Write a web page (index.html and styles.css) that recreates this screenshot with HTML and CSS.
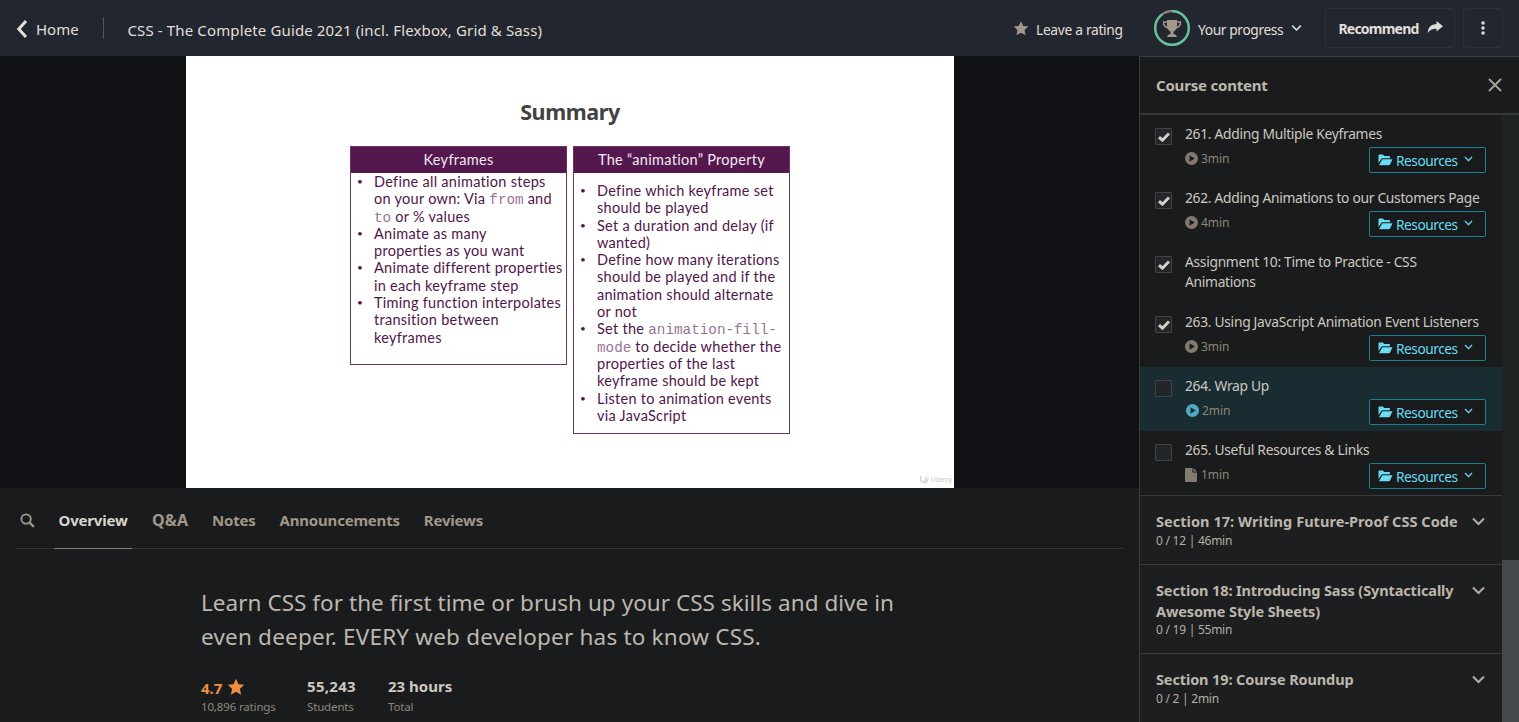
FILE: index.html
```html
<!DOCTYPE html>
<html lang="en">
<head>
<meta charset="utf-8">
<title>CSS - The Complete Guide 2021</title>
<link rel="stylesheet" href="styles.css">
</head>
<body>
<svg class="defs" aria-hidden="true">
  <symbol id="star" viewBox="0 0 24 24"><path d="M12 1l3.3 7.2 7.7.9-5.7 5.3 1.5 7.8L12 18.400l-6.800 3.800 1.500-7.800L1 9.100l7.700-.9z"/></symbol>
  <symbol id="chevron" viewBox="0 0 14 9"><path d="M1.500 1.500L7 7l5.500-5.500" fill="none" stroke="currentColor" stroke-width="2"/></symbol>
  <symbol id="check" viewBox="0 0 12 10"><path d="M1 5.200l3.400 3L11 1.500" fill="none" stroke="currentColor" stroke-width="3"/></symbol>
  <symbol id="play" viewBox="0 0 13 13"><path fill-rule="evenodd" d="M6.500 0a6.500 6.500 0 1 0 0 13 6.500 6.500 0 0 0 0-13zM4.500 3.200l5.300 3.300-5.300 3.300z"/></symbol>
  <symbol id="file" viewBox="0 0 12 14"><path d="M1 0h6.500v4.500H12V13q0 1-1 1H1q-1 0-1-1V1q0-1 1-1zM8.500 0L12 3.500H8.500z"/></symbol>
  <symbol id="folder" viewBox="0 0 15 12"><path d="M.5 9V1.500Q.5.500 1.500.500h3.300L6.300 2H11q1 0 1 1v1.300H4.500Q3.500 4.300 3 5.200zM4.300 5.300h10.200L12 10.500q-.4.800-1.300.8H1z"/></symbol>
</svg>

<header class="topbar">
  <a class="home"><svg class="back" viewBox="0 0 12 20"><path d="M10 2L2.800 10l7.200 8" fill="none" stroke="currentColor" stroke-width="3"/></svg><span>Home</span></a>
  <div class="course-title">CSS - The Complete Guide 2021 (incl. Flexbox, Grid &amp; Sass)</div>
  <a class="rate"><svg class="rate-star"><use href="#star"/></svg><span>Leave a rating</span></a>
  <a class="progress">
    <svg class="ring" viewBox="0 0 36 36">
      <circle cx="18" cy="18" r="16.800" fill="none" stroke="#8b8378" stroke-width="2.200"/>
      <circle class="ring-done" cx="18" cy="18" r="16.800" pathLength="100" stroke-dasharray="90 10" transform="rotate(-90 18 18)"/>
      <g fill="#a39788"><path d="M13 10h10v5q0 5-3.500 6.500v2.500q2.500.3 3.500 2.500v.5H13v-.5q1-2.200 3.500-2.500v-2.500Q13 20 13 15z"/><path d="M13.500 12H9.500q0 5 5 6M22.500 12h4q0 5-5 6" fill="none" stroke="#a39788" stroke-width="1.500"/></g>
    </svg>
    <span>Your progress</span><svg class="chev-sm"><use href="#chevron"/></svg>
  </a>
  <button class="recommend"><span>Recommend</span><svg class="share" viewBox="0 0 16 12"><path d="M9.500 0L16 5.300l-6.500 5.200V7.700Q3.500 7.500.5 12 1 3.500 9.500 3z"/></svg></button>
  <button class="more"><svg viewBox="0 0 4 14"><circle cx="2" cy="2" r="1.700"/><circle cx="2" cy="7" r="1.700"/><circle cx="2" cy="12" r="1.700"/></svg></button>
</header>

<div class="layout">
  <main>
    <section class="player">
      <div class="slide">
        <h1>Summary</h1>
        <div class="cards">
          <div class="card card-keyframes">
            <h2>Keyframes</h2>
            <ul>
              <li>Define all animation steps<br>on your own: Via <code>from</code> and<br><code>to</code> or % values</li>
              <li>Animate as many<br>properties as you want</li>
              <li>Animate different properties<br>in each keyframe step</li>
              <li>Timing function interpolates<br>transition between<br>keyframes</li>
            </ul>
          </div>
          <div class="card card-animation">
            <h2>The “animation” Property</h2>
            <ul>
              <li>Define which keyframe set<br>should be played</li>
              <li>Set a duration and delay (if<br>wanted)</li>
              <li>Define how many iterations<br>should be played and if the<br>animation should alternate<br>or not</li>
              <li>Set the <code>animation-fill-</code><br><code>mode</code> to decide whether the<br>properties of the last<br>keyframe should be kept</li>
              <li>Listen to animation events<br>via JavaScript</li>
            </ul>
          </div>
        </div>
        <div class="watermark"><svg viewBox="0 0 12 10"><path d="M2 1q-1 7 2 7t4-6M6 9q3 0 4-5" fill="none" stroke="currentColor" stroke-width="1.300"/></svg>Udemy</div>
      </div>
    </section>
    <nav class="tabs">
      <svg class="search" viewBox="0 0 16 16"><circle cx="6.500" cy="6.500" r="5" fill="none" stroke="currentColor" stroke-width="2"/><path d="M10 10l4.800 4.800" stroke="currentColor" stroke-width="2.500"/></svg>
      <a class="tab active">Overview</a><a class="tab qa">Q&amp;A</a><a class="tab">Notes</a><a class="tab">Announcements</a><a class="tab">Reviews</a>
    </nav>
    <section class="overview">
      <p class="lead">Learn CSS for the first time or brush up your CSS skills and dive in<br><span>even deeper. EVERY web developer has to know CSS.</span></p>
      <div class="stats">
        <div class="stat rating"><b>4.7 <svg><use href="#star"/></svg></b><span>10,896 ratings</span></div>
        <div class="stat students"><b>55,243</b><span>Students</span></div>
        <div class="stat"><b>23 hours</b><span>Total</span></div>
      </div>
    </section>
  </main>

  <aside class="sidebar">
    <div class="side-head"><h3>Course content</h3><svg viewBox="0 0 14 14"><path d="M1 1l12 12M13 1L1 13" stroke="currentColor" stroke-width="1.800"/></svg></div>
    <div class="side-body">
      <div class="side-list">
        <div class="lesson">
          <i class="box"><svg><use href="#check"/></svg></i>
          <div class="info"><p>261. Adding Multiple Keyframes</p><div class="meta"><svg><use href="#play"/></svg><span>3min</span><button class="res"><svg class="folder"><use href="#folder"/></svg><span>Resources</span><svg class="caret"><use href="#chevron"/></svg></button></div></div>
        </div>
        <div class="lesson">
          <i class="box"><svg><use href="#check"/></svg></i>
          <div class="info"><p>262. Adding Animations to our Customers Page</p><div class="meta"><svg><use href="#play"/></svg><span>4min</span><button class="res"><svg class="folder"><use href="#folder"/></svg><span>Resources</span><svg class="caret"><use href="#chevron"/></svg></button></div></div>
        </div>
        <div class="lesson assignment">
          <i class="box"><svg><use href="#check"/></svg></i>
          <div class="info"><p>Assignment 10: Time to Practice - CSS<br>Animations</p></div>
        </div>
        <div class="lesson">
          <i class="box"><svg><use href="#check"/></svg></i>
          <div class="info"><p>263. Using JavaScript Animation Event Listeners</p><div class="meta"><svg><use href="#play"/></svg><span>3min</span><button class="res"><svg class="folder"><use href="#folder"/></svg><span>Resources</span><svg class="caret"><use href="#chevron"/></svg></button></div></div>
        </div>
        <div class="lesson current">
          <i class="box"></i>
          <div class="info"><p>264. Wrap Up</p><div class="meta"><svg><use href="#play"/></svg><span>2min</span><button class="res"><svg class="folder"><use href="#folder"/></svg><span>Resources</span><svg class="caret"><use href="#chevron"/></svg></button></div></div>
        </div>
        <div class="lesson">
          <i class="box"></i>
          <div class="info"><p>265. Useful Resources &amp; Links</p><div class="meta"><svg class="doc"><use href="#file"/></svg><span>1min</span><button class="res"><svg class="folder"><use href="#folder"/></svg><span>Resources</span><svg class="caret"><use href="#chevron"/></svg></button></div></div>
        </div>
        <div class="section"><div><h4 class="loose">Section 17: Writing Future-Proof CSS Code</h4><span>0 / 12 | 46min</span></div><svg><use href="#chevron"/></svg></div>
        <div class="section tall"><div><h4>Section 18: Introducing Sass (Syntactically<br>Awesome Style Sheets)</h4><span>0 / 19 | 55min</span></div><svg><use href="#chevron"/></svg></div>
        <div class="section last"><div><h4>Section 19: Course Roundup</h4><span>0 / 2 | 2min</span></div><svg><use href="#chevron"/></svg></div>
      </div>
      <div class="scrollbar"><div class="thumb"></div></div>
    </div>
  </aside>
</div>
</body>
</html>
```
FILE: styles.css
```css
* { box-sizing: border-box; margin: 0; padding: 0; }
body {
  width: 1519px; height: 722px; overflow: hidden;
  background: #1a1b1c; color: #cdc8c0;
  font-family: "Noto Sans", "Open Sans", sans-serif;
  font-size: 14px; white-space: nowrap;
}
svg { display: block; flex: none; fill: currentColor; }
.defs { display: none; }
button { font: inherit; color: inherit; background: none; display: flex; align-items: center; }

/* Top bar */
.topbar { height: 56px; background: #22272f; display: flex; align-items: center; padding: 0 16px; color: #e2dfda; }
.home { display: flex; align-items: center; gap: 8px; height: 22px; width: 88px; border-right: 1px solid #55544f; font-size: 15px; letter-spacing: 0; padding-top: 1px; }
.back { width: 12px; height: 20px; }
.course-title { margin-left: 23.5px; padding-top: 4px; font-size: 15px; letter-spacing: .13px; flex: 1; }
.rate { display: flex; align-items: center; gap: 7px; width: 141px; padding-top: 2px; font-size: 13.8px; letter-spacing: -.32px; }
.rate-star { width: 16px; height: 17px; margin-top: -2px; fill: #a39788; }
.progress { display: flex; align-items: center; gap: 8px; width: 171px; font-size: 13.8px; letter-spacing: -.4px; }
.ring { width: 36px; height: 36px; }
.ring-done { fill: none; stroke: #62c49d; stroke-width: 2.2; }
.progress span { padding-top: 2px; }
.chev-sm { width: 11px; height: 8px; }
.recommend { width: 130px; height: 40px; border: 1px solid #2d3137; border-radius: 4px; padding: 1px 0 0 12px; gap: 8px; font-weight: 700; letter-spacing: -.78px; }
.recommend span { width: 81px; }
.share { width: 16px; height: 12px; margin-top: -3px; }
.more { width: 40px; height: 40px; margin-left: 8px; border: 1px solid #2d3137; border-radius: 4px; justify-content: center; }
.more svg { width: 4px; height: 14px; }

.layout { display: grid; grid-template-columns: 1139px 380px; height: 666px; }

/* Player */
.player { height: 432px; background: #101115; display: flex; padding-left: 186px; }
.slide { width: 768px; height: 432px; background: #fff; display: flex; flex-direction: column; align-items: center; font-family: Lato, sans-serif; color: #51154b; padding-top: 41px; position: relative; }
.slide h1 { font: 700 21.5px/30px "Noto Sans", sans-serif; color: #424242; letter-spacing: -.4px; }
.cards { display: flex; align-items: flex-start; gap: 6px; margin-top: 19px; }
.card { width: 217px; border: 1px solid #6b3666; }
.card h2 { height: 26px; background: #54184e; color: #f3e9f2; font-size: 14.5px; font-weight: 400; line-height: 26px; text-align: center; letter-spacing: .3px; }
.card ul { list-style: none; }
.card li { padding-left: 23px; font-size: 14.5px; line-height: 17.3px; letter-spacing: .28px; position: relative; }
.card li::before { content: "•"; position: absolute; left: 6px; top: 0; font-size: 10px; }
.card code { font-family: "Liberation Mono", monospace; font-size: 14.3px; letter-spacing: 0; line-height: 1; color: #987395; }
.card-keyframes { height: 219px; }
.card-animation { height: 288px; }
.card-animation ul { padding-top: 9px; }
.watermark { position: absolute; right: 2px; bottom: 4px; display: flex; align-items: center; gap: 1px; font: 6.5px "Noto Sans", sans-serif; letter-spacing: -.1px; color: #c9c9c9; }
.watermark svg { width: 11px; height: 9px; }

/* Tabs */
.tabs { margin: 0 16px; width: 1107px; height: 61px; border-bottom: 1px solid #34352f; display: flex; align-items: center; padding-left: 4px; color: #a19789; font-size: 15px; font-weight: 700; letter-spacing: -.2px; }
.search { width: 15px; height: 15px; margin: 4px 19px 0 0; }
.tab { height: 61px; line-height: 65px; padding: 0 4px; margin-right: 16px; }
.tab.active { width: 78px; padding-left: 4.5px; color: #d8d4ce; border-bottom: 1px solid #847c70; }
.tab.qa { width: 44px; font-size: 16px; letter-spacing: .2px; }

/* Overview */
.overview { padding: 37px 0 0 201px; }
.lead { font-size: 22.5px; line-height: 33.5px; letter-spacing: .04px; color: #bdb7af; }
.lead span { letter-spacing: .2px; }
.stats { display: flex; margin-top: 23px; }
.stat { display: flex; flex-direction: column; }
.stat b { font-size: 15px; line-height: 20px; letter-spacing: 0; height: 20px; }
.stat span { font-size: 11.5px; line-height: 18px; margin-top: 1.5px; letter-spacing: -.15px; color: #90877b; }
.rating { width: 106px; }
.rating b { display: flex; gap: 5px; color: #eb8f42; padding-top: 2px; }
.rating svg { width: 18px; height: 18px; }
.students { width: 81px; }
.students b { letter-spacing: .3px; }

/* Sidebar */
.sidebar { border-left: 1px solid #3a3e3f; border-top: 1px solid #3a3e3f; }
.side-head { height: 58px; border-bottom: 2px solid #343839; display: flex; align-items: center; justify-content: space-between; padding: 0 17px 0 16px; color: #aaa398; }
.side-head h3 { font-size: 15px; letter-spacing: -.2px; color: #bdb7ae; }
.side-head svg { width: 14px; height: 14px; }
.side-body { display: flex; height: 607px; }
.side-list { width: 362px; }
.lesson { height: 64px; padding: 9px 16px 0 15px; display: flex; gap: 13px; }
.assignment { height: 60px; }
.box { flex: none; width: 17px; height: 17px; margin-top: 4px; background: #232628; border: 1px solid #404345; border-radius: 1px; display: grid; place-items: center; color: #d3cec6; }
.box svg { width: 12px; height: 10px; }
.info { flex: 1; min-width: 0; }
.info p { font-size: 13.8px; line-height: 20px; letter-spacing: -.29px; }
.meta { display: flex; align-items: center; height: 29px; gap: 3px; font-size: 12px; color: #8f8679; letter-spacing: -.1px; }
.meta > svg { width: 13px; height: 13px; color: #847b70; }
.meta > .doc { width: 12px; height: 14px; margin-right: 1px; }
.current { background: #182c32; }
.current .meta > svg { color: #50adc1; margin-left: 1px; }
.res { margin: 3px 0 0 auto; width: 117px; height: 26px; border: 1px solid #197f91; border-radius: 2px; background: #181a1b; color: #6adcf4; font-size: 13.7px; letter-spacing: -.45px; padding-left: 8px; }
.folder { width: 15px; height: 12px; margin-right: 3px; }
.caret { width: 9px; height: 6px; margin: -3px 0 0 6px; }
.section { background: #1c1e1f; border-top: 1px solid #383b3c; height: 69px; display: flex; justify-content: space-between; padding: 15px 16px 0 16px; color: #b5aea4; }
.tall { height: 89px; }
.section.last { height: 80px; }
.section h4 { font-size: 14.5px; line-height: 20.5px; letter-spacing: -.12px; color: #bdb6ac; }
.section h4.loose { letter-spacing: .05px; }
.section span { display: block; font-size: 12px; line-height: 17px; letter-spacing: -.25px; }
.section svg { width: 15px; height: 9px; margin-top: 6px; }
.scrollbar { width: 17px; background: #1e2223; padding-top: 445px; }
.thumb { height: 162px; background: #43484b; }
```
